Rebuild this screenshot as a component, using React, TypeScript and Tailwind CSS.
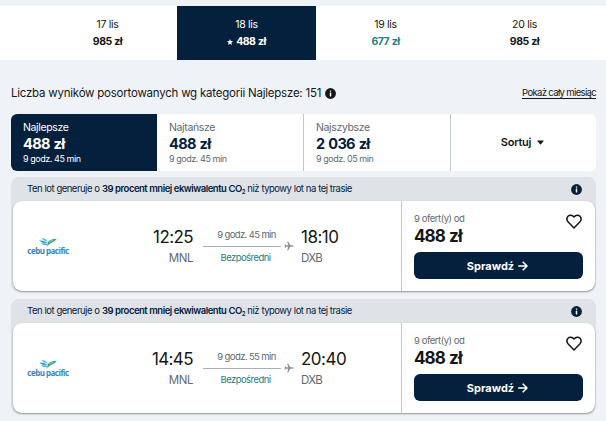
import clsx from 'clsx';

const days = [
  { date: '17 lis', price: '985 zł' },
  { date: '18 lis', price: '488 zł', selected: true },
  { date: '19 lis', price: '677 zł', cheap: true },
  { date: '20 lis', price: '985 zł' },
];

const tabs = [
  { label: 'Najlepsze', price: '488 zł', duration: '9 godz. 45 min', active: true },
  { label: 'Najtańsze', price: '488 zł', duration: '9 godz. 45 min' },
  { label: 'Najszybsze', price: '2 036 zł', duration: '9 godz. 05 min' },
];

const flights = [
  { depart: '12:25', arrive: '18:10', duration: '9 godz. 45 min' },
  { depart: '14:45', arrive: '20:40', duration: '9 godz. 55 min' },
];

function InfoIcon({ className }: { className?: string }) {
  return (
    <svg viewBox="0 0 12 12" className={clsx('shrink-0', className)}>
      <circle cx="6" cy="6" r="5.9" fill="currentColor" />
      <rect x="5.2" y="2.6" width="1.6" height="1.5" rx=".5" fill="white" />
      <rect x="5.2" y="5" width="1.6" height="4.2" rx=".4" fill="white" />
    </svg>
  );
}

function AirlineLogo() {
  return (
    <div className="flex w-[42px] flex-col items-center">
      <svg viewBox="0 0 18 9" className="h-[9px] w-[18px]">
        <path d="M2.6 .3 Q7 -.4 9 4 Q7.5 3 5.8 2.8 Q3.6 2.4 2.6 .3Z" fill="#61bde4" />
        <path d="M.3 2.6 Q5 2 9 5.2 Q6.6 5.3 4.3 4.9 Q1.6 4.4 .3 2.6Z" fill="#2e9ed2" />
        <path d="M2.2 5.4 Q6 5 9.4 6.8 Q5.6 8.3 2.2 5.4Z" fill="#4cb3da" />
        <path d="M8.6 4.4 Q11 .9 17.8 .8 Q16.4 3.3 13.4 4.2 Q10.4 5.3 7.6 8.9 Q9.2 6.4 8.6 4.4Z" fill="#36a18b" />
        <path d="M10.2 3.8 Q12 2 15.4 1.8 Q13.4 3 10.4 4.6Z" fill="#a0d4a6" />
      </svg>
      <span className="font-['Open_Sans',sans-serif] text-[8px] leading-[8px] font-bold tracking-[-0.48px] [word-spacing:-0.2px] whitespace-nowrap text-[#3d83bd]">
        cebu pacific
      </span>
    </div>
  );
}

function Plane() {
  return (
    <svg viewBox="0 0 10 10" className="h-[10px] w-[10px] shrink-0 text-[#8e9298]">
      <path
        d="M9.6 5 Q9.3 4.3 8.5 4.3 H6.3 L4.2 .6 H3.2 L4.2 4.3 H2.2 L1.3 3.2 H.5 L1 5 L.5 6.8 H1.3 L2.2 5.7 H4.2 L3.2 9.4 H4.2 L6.3 5.7 H8.5 Q9.3 5.7 9.6 5Z"
        fill="currentColor"
      />
    </svg>
  );
}

function DateStrip() {
  return (
    <div className="grid h-[54px] grid-cols-[repeat(4,139px)] bg-white pl-[38px]">
      {days.map(day => (
        <div
          key={day.date}
          className={clsx(
            'flex flex-col items-center pt-[10px] text-[10.5px] leading-[17px]',
            day.selected ? 'bg-[#05203c] text-white' : 'text-[#161616]'
          )}
        >
          <span className="tracking-[-0.3px]">{day.date}</span>
          <span className={clsx('flex items-center gap-[3px] font-bold tracking-[-0.5px] [word-spacing:0.6px]', day.cheap && 'text-[#2a8080]')}>
            {day.selected && (
              <svg viewBox="0 0 10 10" className="h-[6px] w-[6px]" fill="currentColor">
                <path d="M5 0 6.4 3.3 10 3.7 7.3 6.1 8.1 10 5 8 1.9 10 2.7 6.1 0 3.7 3.6 3.3Z" />
              </svg>
            )}
            {day.price}
          </span>
        </div>
      ))}
    </div>
  );
}

function SortTabs() {
  return (
    <div className="grid h-[57px] grid-cols-[146px_147px_147px_145px] overflow-hidden rounded-md bg-white">
      {tabs.map((tab, i) => (
        <div
          key={tab.label}
          className={clsx(
            'flex flex-col pt-[7px] pl-3',
            tab.active ? 'bg-[#05203c] text-white' : 'text-[#05203c]',
            i > 0 && 'border-r border-[#c1c7cf]'
          )}
        >
          <span className={clsx('text-[10.5px] leading-[13px] tracking-[-0.35px]', !tab.active && 'text-[#626971]')}>
            {tab.label}
          </span>
          <span className="text-[14.5px] leading-[19px] font-bold tracking-[-0.65px] [word-spacing:1px]">{tab.price}</span>
          <span className={clsx('text-[9px] leading-[12px] tracking-[-0.45px]', !tab.active && 'text-[#626971]')}>
            {tab.duration}
          </span>
        </div>
      ))}
      <button className="flex items-center justify-center gap-[6px] pr-[2px] text-[11px] font-semibold tracking-[-0.25px] text-[#161616]">
        Sortuj
        <svg viewBox="0 0 8 5" className="h-[5px] w-[7px]">
          <path d="M.7 .3H7.3Q8 .3 7.6 .9L4.5 4.5Q4 5 3.5 4.5L.4 .9Q0 .3 .7 .3Z" fill="currentColor" />
        </svg>
      </button>
    </div>
  );
}

function FlightCard({ flight }: { flight: (typeof flights)[number] }) {
  return (
    <div className="h-[115px] rounded-lg bg-[#dfe3e8] pr-px pl-[2px]">
      <div className="flex h-6 items-center justify-between pr-[13px] pl-[14px] text-[#05203c]">
        <p className="text-[9.5px] tracking-[-0.5px] [word-spacing:0.2px] whitespace-nowrap">
          Ten lot generuje o{' '}
          <b className="font-semibold">
            39 procent mniej ekwiwalentu CO<sub className="bottom-[-2px] text-[6px]">2</sub>
          </b>{' '}
          niż typowy lot na tej trasie
        </p>
        <InfoIcon className="h-[11px] w-[11px]" />
      </div>

      <div className="flex h-[90px] rounded-[9px] bg-white shadow-[0_1px_2px_rgba(37,32,31,0.4)]">
        <div className="flex flex-1 items-start border-r border-[#c1c7cf] pl-[14px]">
          <div className="pt-[37px]">
            <AirlineLogo />
          </div>
          <div className="ml-[74px] flex w-[50px] flex-col items-end pt-[26px]">
            <span className="text-[17px] leading-[21px] tracking-[-0.6px] text-[#161616]">{flight.depart}</span>
            <span className="pt-[3px] text-[11.5px] leading-[15px] tracking-[-0.4px] text-[#626971]">MNL</span>
          </div>
          <div className="ml-[10px] w-[91px] pt-[28px]">
            <p className="w-[87px] text-center text-[9.5px] leading-[12px] tracking-[-0.6px] [word-spacing:-0.1px] text-[#626971]">
              {flight.duration}
            </p>
            <div className="flex h-[10px] items-center gap-[3px]">
              <div className="h-px flex-1 bg-[#aab0b8]" />
              <Plane />
            </div>
            <p className="w-[85px] pt-px text-center text-[9.5px] leading-[12px] tracking-[-0.55px] text-[#2a8080]">Bezpośredni</p>
          </div>
          <div className="ml-[7px] flex flex-col pt-[26px]">
            <span className="text-[17px] leading-[21px] tracking-[-0.5px] text-[#161616]">{flight.arrive}</span>
            <span className="pt-[3px] text-[11.5px] leading-[15px] tracking-[-0.7px] text-[#626971]">DXB</span>
          </div>
        </div>

        <div className="flex w-[193px] flex-col px-3 pt-[12px]">
          <div className="flex justify-between">
            <div className="flex flex-col">
              <span className="text-[9.5px] leading-[12px] tracking-[-0.45px] text-[#626971]">9 ofert(y) od</span>
              <span className="text-[17px] leading-[22px] font-bold tracking-[-0.9px] [word-spacing:1px] text-[#161616]">488 zł</span>
            </div>
            <svg viewBox="0 0 16 15" className="mt-[1px] mr-px h-[15px] w-4" fill="none" stroke="#161616" strokeWidth="1.5">
              <path d="M8 14 2.2 8C.7 6.2.6 3.9 2 2.3 3.5.7 6.1.8 8 3 9.9.8 12.5.7 14 2.3c1.4 1.6 1.3 3.9-.2 5.7Z" strokeLinejoin="round" />
            </svg>
          </div>
          <button className="mt-[5px] flex h-[27px] items-center justify-center gap-1 rounded-md bg-[#05203c] pt-px pr-[2px] text-[11px] font-bold text-white">
            Sprawdź
            <svg viewBox="0 0 10 10" className="h-[10px] w-[10px]" fill="none" stroke="currentColor" strokeWidth="1.6">
              <path d="M.8 5H9M5.2 1.2 9 5 5.2 8.8" strokeLinecap="round" strokeLinejoin="round" />
            </svg>
          </button>
        </div>
      </div>
    </div>
  );
}

export default function App() {
  return (
    <div className="h-[421px] w-[606px] overflow-hidden bg-[#eff3f8] pt-[6px] font-[Inter,sans-serif]">
      <DateStrip />
      <div className="pr-[10px] pl-[11px]">
        <div className="flex h-[54px] items-center justify-between pt-[12px] text-[#161616]">
          <div className="flex items-center gap-1">
            <h1 className="pt-px text-[11.5px] tracking-[-0.23px] whitespace-nowrap">
              Liczba wyników posortowanych wg kategorii Najlepsze: 151
            </h1>
            <InfoIcon className="h-[11px] w-[11px]" />
          </div>
          <a className="border-b border-[#161616] text-[9.5px] leading-[11px] tracking-[-0.65px] whitespace-nowrap">
            Pokaż cały miesiąc
          </a>
        </div>
        <SortTabs />
        <div className="mt-[6px] flex flex-col gap-[7px]">
          {flights.map(flight => (
            <FlightCard key={flight.depart} flight={flight} />
          ))}
          <div className="h-6 rounded-t-lg bg-[#dfe3e8]" />
        </div>
      </div>
    </div>
  );
}
